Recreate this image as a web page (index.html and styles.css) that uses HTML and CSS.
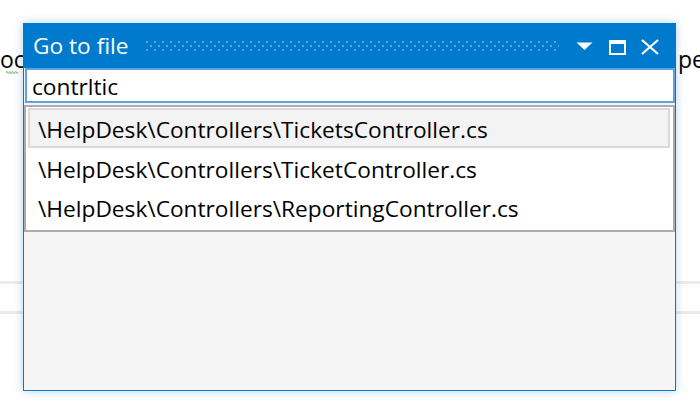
FILE: index.html
```html
<!DOCTYPE html>
<html lang="en">
<head>
<meta charset="utf-8">
<title>Go to file</title>
<link rel="stylesheet" href="styles.css">
</head>
<body>
  <div class="editor">
    <div class="code-line">
      <div class="frag frag-left">
        <span class="frag-text">oc</span>
        <svg class="squiggle" width="24" height="6" viewBox="0 0 24 6" aria-hidden="true">
          <polyline points="0,3 1.5,1 3,3 4.5,5 6,3 7.5,1 9,3 10.5,5 12,3 13.5,1 15,3 16.5,5 18,3 19.5,1 21,3 22.5,5 24,3" fill="none" stroke="#2f9a2f" stroke-width="1.6"/>
        </svg>
      </div>
      <div class="frag frag-right">pe</div>
    </div>
    <div class="rule rule-1"></div>
    <div class="rule rule-2"></div>
  </div>

  <div class="dialog">
    <div class="titlebar">
      <span class="title">Go to file</span>
      <svg class="grip" xmlns="http://www.w3.org/2000/svg" aria-hidden="true">
        <defs>
          <pattern id="gripdots" x="0" y="0" width="8" height="8" patternUnits="userSpaceOnUse">
            <rect x="0" y="0" width="2" height="2" fill="#5aa2e0"/>
            <rect x="4" y="4" width="2" height="2" fill="#5aa2e0"/>
          </pattern>
        </defs>
        <rect x="0" y="0" width="100%" height="10" fill="url(#gripdots)"/>
      </svg>
      <div class="controls">
        <svg class="ctl ctl-drop" width="17" height="8" viewBox="0 0 17 8" aria-hidden="true">
          <polygon points="0.5,0.5 16.5,0.5 8.5,8" fill="#fff"/>
        </svg>
        <svg class="ctl ctl-max" width="17" height="15" viewBox="0 0 17 15" aria-hidden="true">
          <rect x="1" y="1" width="15" height="13" fill="none" stroke="#fff" stroke-width="2"/>
          <rect x="0" y="0" width="17" height="4" fill="#fff"/>
        </svg>
        <svg class="ctl ctl-close" width="20" height="16" viewBox="0 0 20 16" aria-hidden="true">
          <path d="M2 1 L18 15 M18 1 L2 15" stroke="#fff" stroke-width="2.3" fill="none"/>
        </svg>
      </div>
    </div>
    <div class="search">contrltic</div>
    <ul class="results">
      <li class="result is-active">\HelpDesk\Controllers\TicketsController.cs</li>
      <li class="result">\HelpDesk\Controllers\TicketController.cs</li>
      <li class="result">\HelpDesk\Controllers\ReportingController.cs</li>
    </ul>
  </div>
</body>
</html>
```

FILE: styles.css
```css
* { box-sizing: border-box; }

html, body {
  margin: 0;
  padding: 0;
}

body {
  width: 700px;
  height: 418px;
  overflow: hidden;
  position: relative;
  background: #ffffff;
  color: #000000;
  font-family: "Open Sans", "Noto Sans", sans-serif;
}

/* editor behind the dialog */
.editor {
  padding-top: 44px;
}

.code-line {
  display: flex;
  justify-content: space-between;
  height: 30px;
  font-size: 23px;
  line-height: 30px;
  white-space: nowrap;
}

.frag-left {
  display: flex;
  flex-direction: column;
  width: 23px;
}

.frag-text {
  display: block;
  height: 30px;
}

.squiggle {
  display: block;
  margin-top: -3px;
}

.frag-right {
  width: 22px;
  overflow: hidden;
}

.rule {
  height: 3px;
  background: #ebebeb;
}

.rule-1 { margin-top: 207px; }
.rule-2 { margin-top: 27px; }

/* dialog */
.dialog {
  position: absolute;
  left: 23px;
  top: 23px;
  width: 653px;
  height: 368px;
  border: 1px solid #007acc;
  background: #f5f5f5;
  box-shadow: 0 0 9px rgba(0, 100, 190, 0.28);
  display: flex;
  flex-direction: column;
}

.titlebar {
  display: flex;
  align-items: center;
  height: 44px;
  flex: none;
  background: #007acc;
  color: #ffffff;
  padding: 0 15px 0 9px;
}

.title {
  font-size: 22.7px;
  line-height: 44px;
  white-space: nowrap;
}

.grip {
  flex: 1;
  height: 10px;
  margin: 0 17px;
  display: block;
}

.controls {
  display: flex;
  align-items: center;
}

.ctl { display: block; }
.ctl-drop { margin-top: -1px; }
.ctl-max { margin-left: 16px; margin-top: 2px; }
.ctl-close { margin-left: 14px; margin-top: 2px; }

.search {
  flex: none;
  height: 35px;
  margin-left: 1px;
  border: 2px solid #5fa2e4;
  background: #ffffff;
  padding: 2px 5px 0;
  font-size: 22.7px;
  line-height: 29px;
  white-space: nowrap;
}

.results {
  flex: none;
  list-style: none;
  margin: 2px 0 0;
  padding: 1px 3px 3px 2px;
  border: 2px solid #acacac;
  background: #ffffff;
}

.result {
  height: 39.5px;
  padding: 4px 0 0 8px;
  border: 2px solid transparent;
  font-size: 22.7px;
  line-height: 31.5px;
  white-space: nowrap;
}

.result.is-active {
  background: #f3f3f3;
  border-color: #dadada;
}
```
